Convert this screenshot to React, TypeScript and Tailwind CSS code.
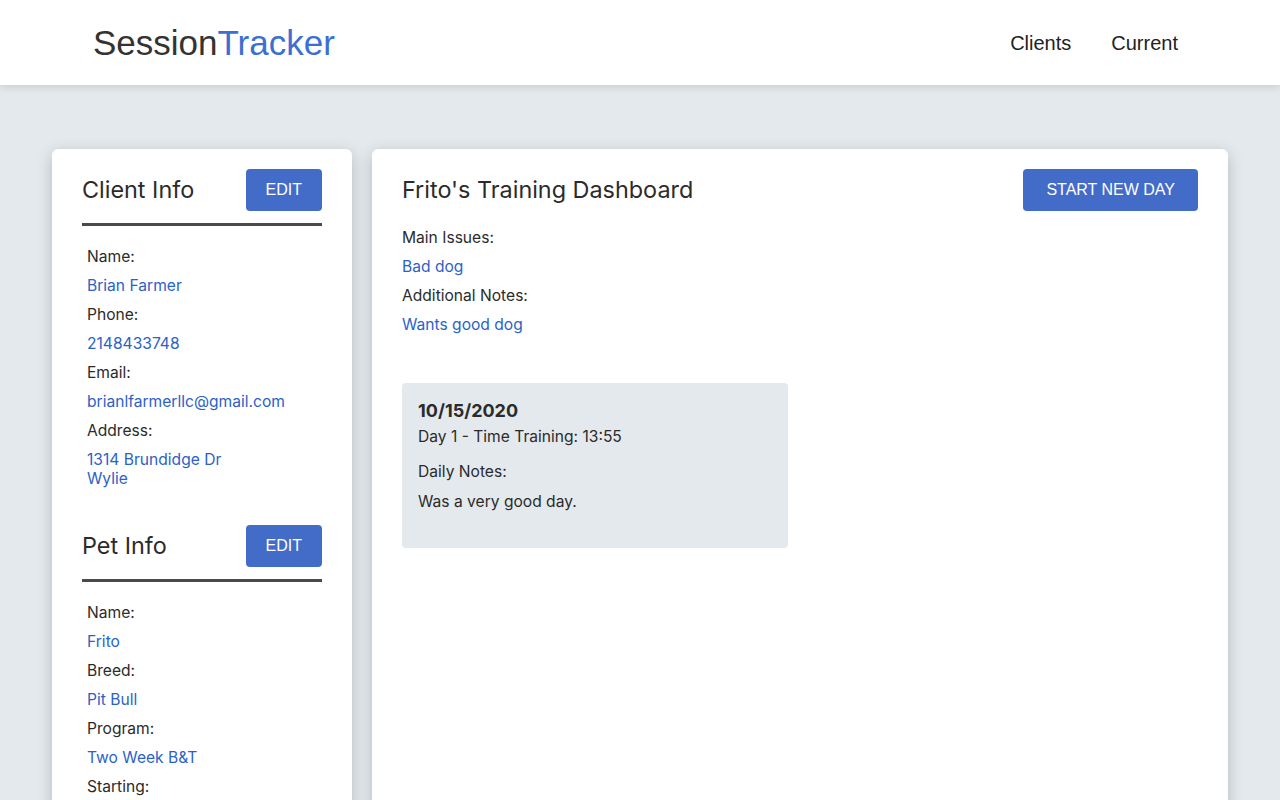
const clientFields: [string, string[]][] = [
  ["Name:", ["Brian Farmer"]],
  ["Phone:", ["2148433748"]],
  ["Email:", ["brianlfarmerllc@gmail.com"]],
  ["Address:", ["1314 Brundidge Dr", "Wylie"]],
];

const petFields: [string, string[]][] = [
  ["Name:", ["Frito"]],
  ["Breed:", ["Pit Bull"]],
  ["Program:", ["Two Week B&T"]],
  ["Starting:", ["10/15/2020"]],
  ["Ending:", ["10/29/2020"]],
];

export default function App() {
  return (
    <div className="min-h-screen bg-[#e3e9ec] font-['Inter',sans-serif] text-[#2b2b2b]">
      <header className="flex h-[85px] items-center justify-between bg-white pl-[93px] pr-[102px] shadow-[0_2px_8px_rgba(0,0,0,0.12)]">
        <div className="font-['Liberation_Sans',sans-serif] text-[35px] leading-none text-[#333]">
          Session<span className="text-[#3b6fd1]">Tracker</span>
        </div>
        <nav className="flex gap-10 font-['Liberation_Sans',sans-serif] text-[20px] text-[#222]">
          <a>Clients</a>
          <a>Current</a>
        </nav>
      </header>

      <main className="flex items-start gap-5 px-[52px] pt-16">
        <aside className="w-[300px] shrink-0 rounded-md bg-white px-[30px] pb-10 pt-5 shadow-[0_4px_16px_rgba(0,0,0,0.2)]">
          <InfoSection title="Client Info" fields={clientFields} />
          <div className="mt-8">
            <InfoSection title="Pet Info" fields={petFields} />
          </div>
        </aside>

        <section className="min-h-[760px] flex-1 rounded-md bg-white px-[30px] pt-5 shadow-[0_4px_16px_rgba(0,0,0,0.2)]">
          <div className="flex items-center justify-between">
            <h1 className="text-[23.4px] font-normal leading-none">Frito's Training Dashboard</h1>
            <Button wide>START NEW DAY</Button>
          </div>
          <div className="mt-3 flex flex-col text-[15.6px] leading-[29px]">
            <span>Main Issues:</span>
            <span className="text-[#2b62c8]">Bad dog</span>
            <span>Additional Notes:</span>
            <span className="text-[#2b62c8]">Wants good dog</span>
          </div>

          <div className="mt-11 h-[165px] w-[386px] rounded bg-[#e3e9ec] px-4 pt-4 text-[15.6px]">
            <div className="text-[18px] font-bold leading-[24px]">10/15/2020</div>
            <div className="mt-[3px] leading-[22px]">Day 1 - Time Training: 13:55</div>
            <div className="mt-[13px] leading-[22px]">Daily Notes:</div>
            <div className="mt-2 leading-[22px]">Was a very good day.</div>
          </div>
        </section>
      </main>
    </div>
  );
}

function Button({ children, wide }: { children: React.ReactNode; wide?: boolean }) {
  return (
    <button
      className={
        wide
          ? "h-[42px] rounded bg-[#436cc9] px-[23px] font-['Liberation_Sans',sans-serif] text-[16px] text-white"
          : "h-[42px] rounded bg-[#436cc9] px-5 font-['Liberation_Sans',sans-serif] text-[16px] text-white"
      }
    >
      {children}
    </button>
  );
}

function InfoSection({ title, fields }: { title: string; fields: [string, string[]][] }) {
  return (
    <div>
      <div className="flex items-center justify-between border-b-[3px] border-[#4a4a4a] pb-[12px]">
        <h2 className="text-[23.4px] font-normal leading-none">{title}</h2>
        <Button>EDIT</Button>
      </div>
      <div className="mt-4 flex flex-col pl-[5px] text-[15.6px] leading-[29px]">
        {fields.map(([label, values]) => (
          <div key={label} className="flex flex-col">
            <span>{label}</span>
            <div className="flex flex-col text-[#2b62c8]">
              {values.length > 1 ? (
                <div className="py-[5px] leading-[19px]">
                  {values.map((v) => (
                    <div key={v}>{v}</div>
                  ))}
                </div>
              ) : (
                <span>{values[0]}</span>
              )}
            </div>
          </div>
        ))}
      </div>
    </div>
  );
}
